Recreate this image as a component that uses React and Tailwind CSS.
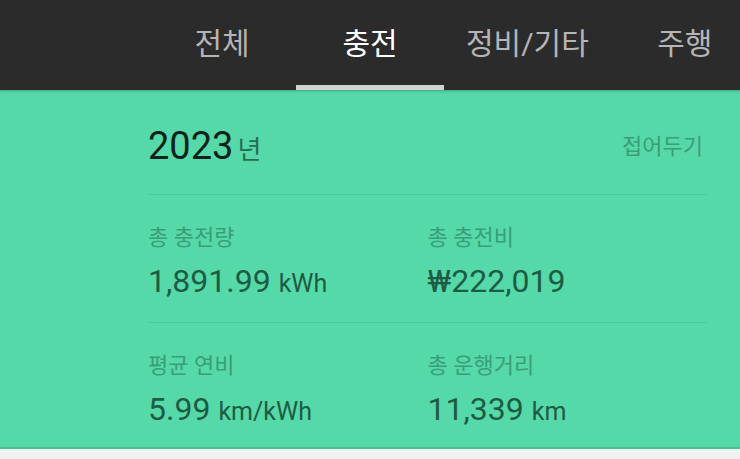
import React from "react";

const tabs = [
  { label: "전체", active: false },
  { label: "충전", active: true },
  { label: "정비/기타", active: false },
  { label: "주행", active: false },
];

const stats = [
  [
    { label: "총 충전량", value: "1,891.99", unit: "kWh" },
    { label: "총 충전비", value: "₩222,019", unit: "" },
  ],
  [
    { label: "평균 연비", value: "5.99", unit: "km/kWh" },
    { label: "총 운행거리", value: "11,339", unit: "km" },
  ],
];

const StatRow = ({ items, last }) => {
  return (
    <div className={`flex pt-[30px] h-[128px] ${last ? "" : "border-b border-[#4cc99a]"}`}>
      {items.map((s) => (
        <div key={s.label} className="w-[280px] flex flex-col">
          <span className="text-[22px] leading-[26px] text-[#3a9e78]">{s.label}</span>
          <span className="mt-[11px] text-[32px] leading-[38px] text-[#1d5c44]">
            {s.value}
            {s.unit && <span className="ml-[8px] text-[25px]">{s.unit}</span>}
          </span>
        </div>
      ))}
    </div>
  );
};

export default function App() {
  return (
    <div className="w-[740px] h-[459px] overflow-hidden bg-[#f1f1ef] font-['Roboto','Noto_Sans_CJK_KR',sans-serif]">
      {/* Tabs */}
      <div className="h-[90px] bg-[#2b2b2b] flex pl-[148px] whitespace-nowrap">
        {tabs.map((t) => (
          <div
            key={t.label}
            className="relative min-w-[148px] px-[22px] flex items-center justify-center shrink-0"
          >
            <span
              className={`text-[30px] leading-none pb-[2px] ${t.active ? "text-white" : "text-[#b5b5b5]"}`}
            >
              {t.label}
            </span>
            {t.active && (
              <div className="absolute left-0 right-0 bottom-0 h-[5px] bg-[#d2d4d2]" />
            )}
          </div>
        ))}
      </div>

      {/* Summary */}
      <div className="h-[359px] bg-[#55d9a8] border-b-2 border-[#49c394] pl-[148px] pr-[33px] shadow-[inset_0_3px_3px_-2px_rgba(0,0,0,0.25)]">
        <div className="h-[105px] flex items-center justify-between border-b border-[#4cc99a] pt-[8px]">
          <div className="flex items-baseline">
            <span className="text-[38px] leading-none text-[#10221b]">2023</span>
            <span className="ml-[4px] text-[26px] leading-none text-[#2a6c53]">년</span>
          </div>
          <button className="text-[22px] text-[#3a9e78] pr-[4px]">접어두기</button>
        </div>
        {stats.map((row, i) => (
          <StatRow key={i} items={row} last={i === stats.length - 1} />
        ))}
      </div>
    </div>
  );
}
